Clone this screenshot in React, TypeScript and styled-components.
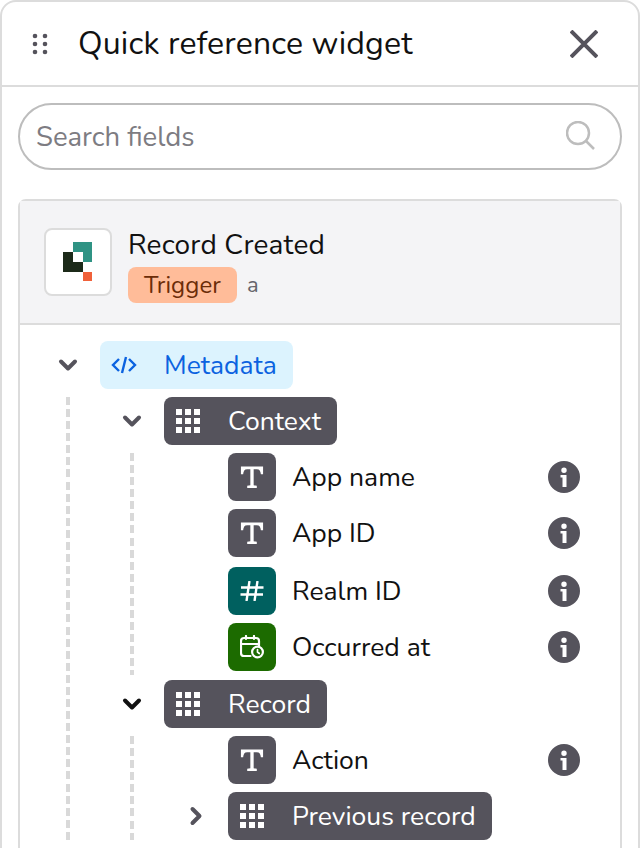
import React from "react";
import styled, { createGlobalStyle } from "styled-components";

const Global = createGlobalStyle`
  html, body { margin: 0; padding: 0; background: #fff; }
  body { font-family: "Nunito", "Noto Sans", "Open Sans", sans-serif; width: 640px; height: 848px; overflow: hidden; }
  * { box-sizing: border-box; }
`;

const Viewport = styled.div`width: 640px; height: 848px; overflow: hidden;`;
const Panel = styled.div`
  width: 640px; height: 1000px; border: 2px solid #dcdcdc; border-radius: 16px; background: #fff; color: #111;
`;
const Header = styled.header`
  height: 85px; display: flex; align-items: center; border-bottom: 2px solid #dcdcdc; padding: 0 40px 0 30px;
`;
const Grip = styled.svg`width: 16px; height: 24px; flex: none; fill: #55535c;`;
const Title = styled.h1`
  margin: 0 0 0 30px; flex: 1; font-size: 32px; font-weight: 400; line-height: 40px; letter-spacing: 0.18px;
`;
const Close = styled.svg`width: 28px; height: 28px; flex: none; stroke: #55535c; stroke-width: 4; fill: none;`;
const Body = styled.div`padding: 16px 16px 0;`;
const Search = styled.div`
  height: 67px; border: 2px solid #bdbdbd; border-radius: 34px; display: flex; align-items: center; justify-content: space-between;
  padding: 0 22px 0 16px;
`;
const Placeholder = styled.span`font-size: 27.500px; color: #7d7c82;`;
const SearchIcon = styled.svg`width: 32px; height: 32px; fill: none; stroke: #bdbdbd; stroke-width: 2.5;`;
const Card = styled.section`margin-top: 29px; min-height: 800px; border: 2px solid #dcdcdc; border-radius: 8px 8px 0 0;`;
const CardHead = styled.div`
  height: 124px; background: #f4f4f6; border-bottom: 2px solid #dcdcdc; display: flex; align-items: center; padding: 0 24px; gap: 16px;
`;
const LogoBox = styled.div`
  width: 68px; height: 68px; background: #fff; border: 2px solid #dcdcdc; border-radius: 8px; flex: none; margin-bottom: 1px;
`;
const Logo = styled.svg`display: block; width: 64px; height: 64px;`;
const HeadText = styled.div`display: flex; flex-direction: column; gap: 4px; margin-top: 5px;`;
const CardTitle = styled.div`font-size: 28px; line-height: 36px; letter-spacing: 0.2px;`;
const TagLine = styled.div`display: flex; align-items: center; gap: 10px;`;
const Tag = styled.span`
  background: #ffbc99; color: #6b2c08; border-radius: 8px; height: 36px; line-height: 36px; padding: 0 16px; font-size: 24px; letter-spacing: 0.1px;
`;
const Small = styled.span`font-size: 22px; color: #66656b;`;
const Tree = styled.div`padding: 16px 0 0 16px; display: flex; flex-direction: column; gap: 8px;`;
const Row = styled.div<{ $nudge?: number }>`
  display: flex; align-items: center; height: 48px; margin-top: ${(p) => p.$nudge ?? 0}px;
`;
const Twisty = styled.div`width: 64px; flex: none; display: flex; justify-content: center;`;
const Chevron = styled.svg<{ $dark?: boolean; $right?: boolean }>`
  width: 24px; height: 24px; fill: none; stroke: ${(p) => (p.$dark ? "#111" : "#55535c")}; stroke-width: 4;
  stroke-linecap: round; stroke-linejoin: round; transform: rotate(${(p) => (p.$right ? -90 : 0)}deg);
`;
const Pill = styled.div<{ $blue?: boolean }>`
  height: 48px; display: flex; align-items: center; border-radius: 8px; padding-right: 16px;
  background: ${(p) => (p.$blue ? "#dcf3fe" : "#55535c")};
  color: ${(p) => (p.$blue ? "#0b62e0" : "#fff")};
  font-size: 26.500px;
`;
const PillIcon = styled.span`width: 48px; margin-right: 16px; flex: none; display: flex; justify-content: center;`;
const Children = styled.div<{ $tail?: number }>`
  margin-left: 30px; padding-left: 34px; padding-bottom: ${(p) => p.$tail ?? 0}px; display: flex; flex-direction: column; gap: 8px;
  background: repeating-linear-gradient(to bottom, #d9d9d9 0 8px, transparent 8px 12.080px) left top / 4px 100% no-repeat;
`;
const Leaf = styled.div<{ $nudge?: number }>`
  height: 48px; display: flex; align-items: center; margin-left: 64px; padding-right: 40px; margin-top: ${(p) => p.$nudge ?? 0}px;
`;
const TypeBox = styled.span<{ $bg: string }>`
  width: 48px; height: 48px; border-radius: 8px; background: ${(p) => p.$bg}; color: #fff; flex: none; margin-right: 16px;
  display: flex; align-items: center; justify-content: center;
`;
const LeafName = styled.span`flex: 1; font-size: 26.500px;`;
const Info = styled.svg`width: 32px; height: 32px; flex: none;`;

const GridIcon = () => (
  <svg width="24" height="24" viewBox="0 0 24 24" fill="#fff">
    {[0, 9, 18].flatMap((y) =>
      [0, 9, 18].map((x) => <rect key={`${x}-${y}`} x={x} y={y} width="6" height="6" />),
    )}
  </svg>
);
const CodeIcon = () => (
  <svg width="26" height="18" viewBox="0 0 26 18" fill="none" stroke="#0b62e0" strokeWidth="2.4">
    <path d="M8 3 2 9l6 6M18 3l6 6-6 6M15 1 11 17" />
  </svg>
);
const TIcon = () => (
  <svg width="24" height="24" viewBox="0 0 26 26" fill="#fff">
    <path d="M1 1.500h24v8.500h-2.400c-.3-3.400-1.400-5.500-4.400-5.500h-3.400v17.500l3.400.6V25H7.800v-2.400l3.400-.6V4.500H7.800C4.800 4.500 3.700 6.600 3.400 10H1z" />
  </svg>
);
const HashIcon = () => (
  <svg width="24" height="20" viewBox="0 0 24 20" fill="none" stroke="#fff" strokeWidth="2.4">
    <path d="M1 6.500h22.500M.5 13.500H23M9.500 0 6.500 20M17.500 0l-3 20" />
  </svg>
);
const CalendarIcon = () => (
  <svg width="24" height="24" viewBox="0 0 24 24" fill="none" stroke="#fff" strokeWidth="2.200" strokeLinecap="round">
    <path d="M10.500 21H4a3 3 0 0 1-3-3V6a3 3 0 0 1 3-3h12a3 3 0 0 1 3 3v5M1 9h18M6 1v3M14 1v3" />
    <circle cx="17.500" cy="17" r="5.400" />
    <path d="M17.500 14.500V17l1.800 1.500" strokeWidth="1.700" />
  </svg>
);
const InfoIcon = () => (
  <Info viewBox="0 0 32 32">
    <path
      fill="#55535c"
      fillRule="evenodd"
      d="M16 0a16 16 0 1 1 0 32 16 16 0 0 1 0-32zm0 6.500a2.700 2.700 0 1 0 0 5.400 2.700 2.700 0 0 0 0-5.400zM12.500 14v2.500h2V26h4V14z"
    />
  </Info>
);
const Down = ({ dark, right }: { dark?: boolean; right?: boolean }) => (
  <Chevron viewBox="0 0 24 24" $dark={dark} $right={right}>
    <path d="M5 8.500l7 7 7-7" />
  </Chevron>
);

const Field = ({ name, bg, icon, nudge }: { name: string; bg: string; icon: React.ReactNode; nudge?: number }) => (
  <Leaf $nudge={nudge}>
    <TypeBox $bg={bg}>{icon}</TypeBox>
    <LeafName>{name}</LeafName>
    <InfoIcon />
  </Leaf>
);

export default function App() {
  return (
    <Viewport>
      <Global />
      <Panel>
        <Header>
          <Grip viewBox="0 0 16 24">
            {[4, 12, 20].flatMap((y) => [3, 13].map((x) => <circle key={`${x}${y}`} cx={x} cy={y} r="2.300" />))}
          </Grip>
          <Title>Quick reference widget</Title>
          <Close viewBox="0 0 28 28"><path d="M1 1l26 26M27 1 1 27" /></Close>
        </Header>
        <Body>
          <Search>
            <Placeholder>Search fields</Placeholder>
            <SearchIcon viewBox="0 0 32 32">
              <circle cx="12" cy="12" r="11" />
              <path d="m20 20 8 8" />
            </SearchIcon>
          </Search>
          <Card>
            <CardHead>
              <LogoBox>
                <Logo viewBox="2 2 64 64">
                  <rect x="29" y="14" width="19" height="20" fill="#2f9384" />
                  <rect x="19" y="24" width="20" height="20" fill="#1c2a19" />
                  <rect x="29" y="24" width="10" height="10" fill="#fff" />
                  <rect x="39" y="44" width="9" height="9" fill="#f0613a" />
                </Logo>
              </LogoBox>
              <HeadText>
                <CardTitle>Record Created</CardTitle>
                <TagLine>
                  <Tag>Trigger</Tag>
                  <Small>a</Small>
                </TagLine>
              </HeadText>
            </CardHead>
            <Tree>
              <Row>
                <Twisty><Down /></Twisty>
                <Pill $blue><PillIcon><CodeIcon /></PillIcon>Metadata</Pill>
              </Row>
              <Children>
                <Row>
                  <Twisty><Down /></Twisty>
                  <Pill><PillIcon><GridIcon /></PillIcon>Context</Pill>
                </Row>
                <Children $tail={4}>
                  <Field name="App name" bg="#55535c" icon={<TIcon />} />
                  <Field name="App ID" bg="#55535c" icon={<TIcon />} />
                  <Field name="Realm ID" bg="#00605f" icon={<HashIcon />} nudge={2} />
                  <Field name="Occurred at" bg="#1c6b00" icon={<CalendarIcon />} />
                </Children>
                <Row $nudge={-3}>
                  <Twisty><Down dark /></Twisty>
                  <Pill><PillIcon><GridIcon /></PillIcon>Record</Pill>
                </Row>
                <Children>
                  <Field name="Action" bg="#55535c" icon={<TIcon />} />
                  <Row>
                    <Twisty><Down right /></Twisty>
                    <Pill><PillIcon><GridIcon /></PillIcon>Previous record</Pill>
                  </Row>
                </Children>
              </Children>
            </Tree>
          </Card>
        </Body>
      </Panel>
    </Viewport>
  );
}
